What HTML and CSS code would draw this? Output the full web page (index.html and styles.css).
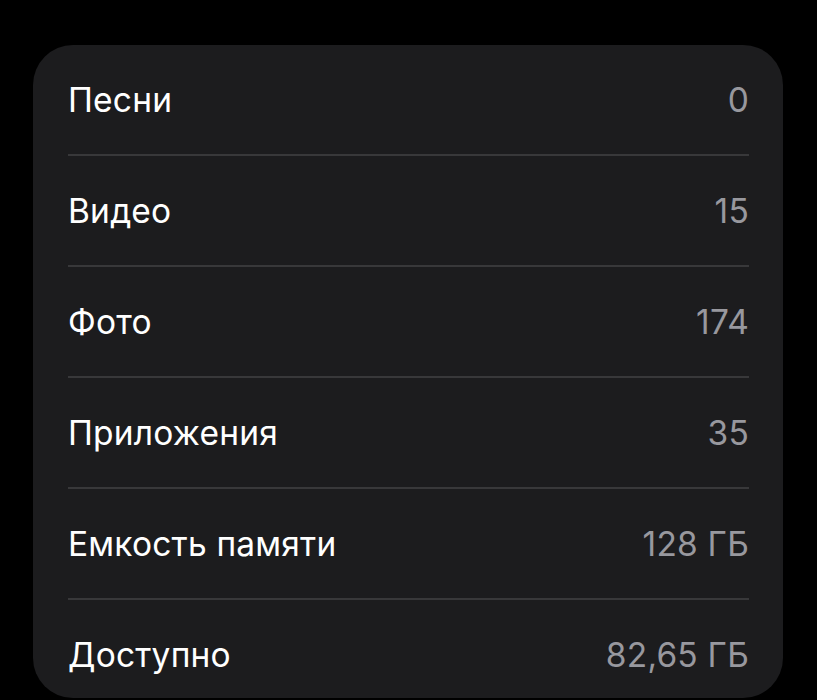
FILE: index.html
```html
<!DOCTYPE html>
<html lang="ru">
<head>
    <meta charset="UTF-8">
    <meta name="viewport" content="width=device-width, initial-scale=1.0">
    <title>Об этом устройстве</title>
    <link rel="stylesheet" href="styles.css">
</head>
<body>
    <div class="card">
        <div class="row"><span class="label">Песни</span><span class="value">0</span></div>
        <div class="row"><span class="label">Видео</span><span class="value">15</span></div>
        <div class="row"><span class="label">Фото</span><span class="value">174</span></div>
        <div class="row"><span class="label">Приложения</span><span class="value">35</span></div>
        <div class="row"><span class="label">Емкость памяти</span><span class="value">128 ГБ</span></div>
        <div class="row"><span class="label">Доступно</span><span class="value">82,65 ГБ</span></div>
    </div>
</body>
</html>
```
FILE: styles.css
```css
html, body {
    margin: 0;
    height: 100%;
    background-color: #000;
    overflow: hidden;
}
body {
    padding: 45px 34px 0 33px;
    box-sizing: border-box;
    font-family: Inter, "Liberation Sans", sans-serif;
}
.card {
    background-color: #1c1c1e;
    border-radius: 40px;
    padding: 0 34px 0 35px;
    height: 653px;
    overflow: hidden;
}
.row {
    display: flex;
    justify-content: space-between;
    align-items: center;
    height: 109px;
    border-bottom: 2px solid #38383a;
    font-size: 33.5px;
    letter-spacing: 0.2px;
}
.row:last-child {
    border-bottom: none;
}
.label {
    color: #ffffff;
}
.value {
    color: #98989e;
}
```
